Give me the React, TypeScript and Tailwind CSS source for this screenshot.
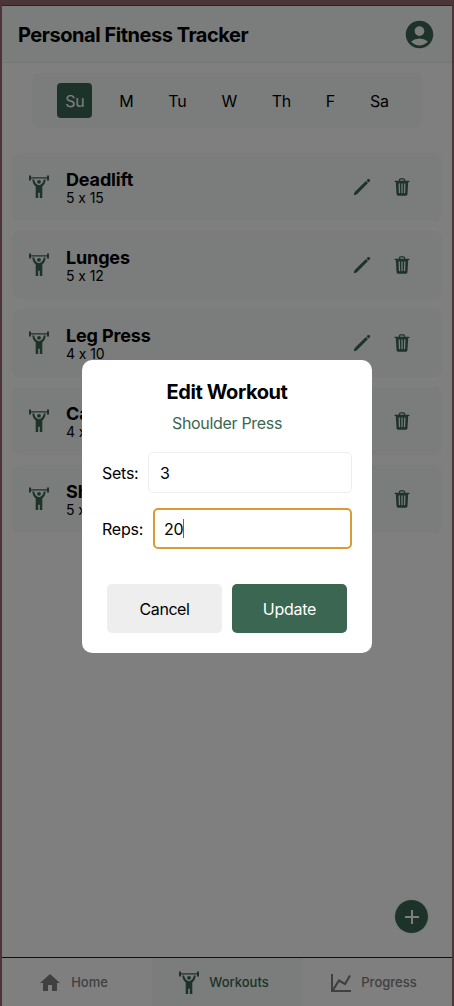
import React from "react";
import { MdAccountCircle, MdHome } from "react-icons/md";
import { IoPencil, IoTrash } from "react-icons/io5";

const days = [
  { label: "Su", width: "w-[35px]" },
  { label: "M", width: "w-[28px]" },
  { label: "Tu", width: "w-[34px]" },
  { label: "W", width: "w-[30px]" },
  { label: "Th", width: "w-[34px]" },
  { label: "F", width: "w-[24px]" },
  { label: "Sa", width: "w-[34px]" },
];

const workouts = [
  { name: "Deadlift", sets: 5, reps: 15 },
  { name: "Lunges", sets: 5, reps: 12 },
  { name: "Leg Press", sets: 4, reps: 10 },
  { name: "Calf Raises", sets: 4, reps: 12 },
  { name: "Shoulder Press", sets: 5, reps: 10 },
];

function Lifter() {
  return (
    <svg viewBox="0 0 20 24" className="h-6 w-5 shrink-0" fill="currentColor">
      <path d="M0 .4h2v5.200H0zM18 .4h2v5.200h-2zM2 2.300h16v1.200H2z" />
      <circle cx="10" cy="6.800" r="1.900" />
      <path d="M3.300 4.500h1.900C5.600 7.500 7.200 9.700 10 10.200c2.800-.3 4.400-2.700 4.800-5.700h1.900c-.2 3-1.300 5.300-3.400 6.900V23h-2.500v-5.300H9.200V23H6.700V11.400C4.600 9.800 3.500 7.500 3.300 4.500z" />
    </svg>
  );
}

function Chart() {
  return (
    <svg viewBox="0 0 20 20" className="size-5 shrink-0" fill="none" stroke="currentColor" strokeWidth="2">
      <path d="M1 1v17h19" />
      <path d="M2 17l6-9.500 6 3.500 5-8.500" strokeWidth="2.200" />
    </svg>
  );
}

export default function App() {
  return (
    <div className="relative h-[1006px] w-[454px] overflow-hidden bg-[#966b71] px-[2px] pt-[5px] font-['Inter',sans-serif] text-black [font-feature-settings:'calt'_0]">
      <div className="flex h-[1001px] flex-col border-t border-[#4b4850] bg-white">
        <header className="flex h-[57px] shrink-0 items-center justify-between border-b border-[#e6efec] bg-[#f5faf8] pr-4 pl-4">
          <h1 className="pt-[2px] text-[20px] font-bold tracking-[-0.460px]">Personal Fitness Tracker</h1>
          <MdAccountCircle className="size-[33px] text-[#3a6652]" />
        </header>
        <div className="mx-[30px] mt-[10px] flex h-[55px] shrink-0 items-center gap-[20px] rounded-lg bg-[#f5faf8] pl-[25.400px]">
          {days.map((day, i) => (
            <button
              key={day.label}
              className={`${day.width} h-[35px] rounded text-base tracking-[-0.200px] ${i === 0 ? "bg-[#3a6652] text-white" : ""}`}
            >
              {day.label}
            </button>
          ))}
        </div>
        <main className="flex grow flex-col gap-[10px] px-[10px] pt-[25px]">
          {workouts.map((w) => (
            <div key={w.name} className="flex h-[68px] items-center rounded-lg bg-[#f5faf8] pr-[30px] pl-[17px] text-[#3a6652]">
              <Lifter />
              <div className="ml-[17px] grow pb-[2px] text-black">
                <h2 className="pt-[2px] text-[18px] leading-[20px] font-bold tracking-[-0.150px]">{w.name}</h2>
                <p className="text-[14px] leading-[15px] tracking-[-0.100px]">{w.sets} x {w.reps}</p>
              </div>
              <IoPencil className="mr-5 size-5" />
              <IoTrash className="size-5" />
            </div>
          ))}
        </main>
        <div className="flex h-[57px] shrink-0 justify-end pr-[24px]">
          <button className="flex size-[33px] items-center justify-center rounded-full bg-[#3a6652] text-white shadow-[0_0_2px_2px_#f5faf8]">
            <svg viewBox="0 0 14 14" className="size-[14px]" stroke="currentColor" strokeWidth="2">
              <path d="M7 0v14M0 7h14" />
            </svg>
          </button>
        </div>
        <nav className="grid h-[49px] shrink-0 grid-cols-3 border-t border-[#202020] text-[13px] font-medium text-[#808080]">
          <div className="flex items-center justify-center gap-[9px] pt-px pr-[8px]"><MdHome className="size-6" />Home</div>
          <div className="flex items-center justify-center gap-[10px] bg-[#f5faf8] pt-px pr-[6px] text-[#3a6652]"><Lifter />Workouts</div>
          <div className="flex items-center justify-center gap-[10px] pt-px pr-[6px]"><Chart />Progress</div>
        </nav>
      </div>
      <div className="absolute inset-0 bg-black/50" />
      <section className="absolute top-[360px] left-[82px] flex h-[293px] w-[290px] flex-col rounded-[10px] bg-white px-5 pt-[20px]">
        <h2 className="text-center text-[20px] leading-6 font-bold tracking-[-0.400px]">Edit Workout</h2>
        <p className="mt-[9px] text-center text-base leading-5 tracking-[-0.320px] text-[#3a6652]">Shoulder Press</p>
        <label className="mt-[19px] flex h-[41px] items-center text-base tracking-[-0.250px]">
          <span className="w-[46px] shrink-0">Sets:</span>
          <span className="flex h-full grow items-center rounded-[5px] border border-[#eee] pl-[11px]">3</span>
        </label>
        <label className="mt-[15px] flex h-[41px] items-center text-base tracking-[-0.250px]">
          <span className="w-[51px] shrink-0">Reps:</span>
          <span className="flex h-full grow items-center rounded-[5px] border-2 border-[#da9b35] pl-[9px]">
            20<i className="h-[19px] w-px bg-[#666]" />
          </span>
        </label>
        <div className="mt-[35px] flex h-[49px] gap-[10px] px-[5px] text-base tracking-[-0.450px]">
          <button className="flex-1 rounded-[5px] bg-[#eee]">Cancel</button>
          <button className="flex-1 rounded-[5px] bg-[#3a6652] tracking-[-0.250px] text-white">Update</button>
        </div>
      </section>
    </div>
  );
}
